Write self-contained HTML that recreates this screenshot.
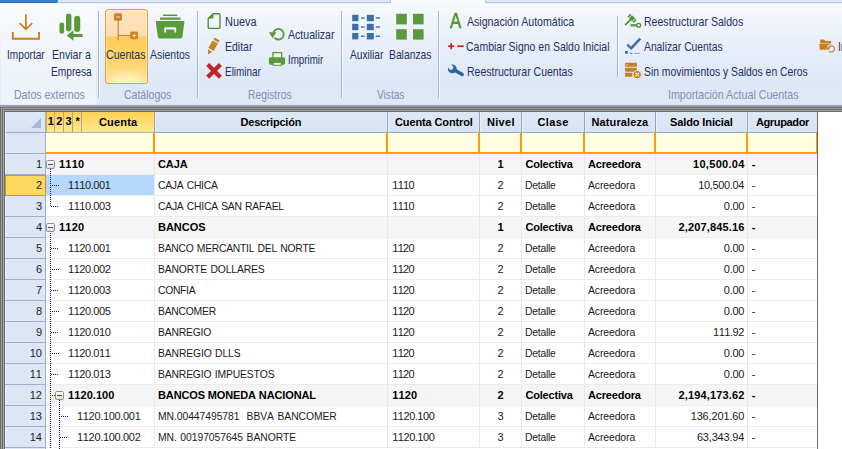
<!DOCTYPE html>
<html lang="es">
<head>
<meta charset="utf-8">
<title>Cuentas</title>
<style>
html,body{margin:0;padding:0;}
body{width:842px;height:449px;overflow:hidden;background:#fff;position:relative;font-family:"Liberation Sans",sans-serif;}
div,span{box-sizing:border-box;}
#ribbon{position:absolute;left:0;top:0;width:842px;height:105px;background:linear-gradient(#f8fbfe 0px,#f3f7fc 12px,#e8eff9 45px,#dee7f5 80px,#dfe8f5 105px);overflow:hidden;}
.ab{position:absolute;}
.rt{position:absolute;transform-origin:0 0;white-space:nowrap;font-size:12.4px;line-height:14px;height:14px;color:#1e3063;}
.gl{position:absolute;transform-origin:0 0;white-space:nowrap;font-size:12.4px;line-height:14px;height:14px;color:#808fb5;}
.sep{position:absolute;width:1px;background:#a7b5d0;}
.sep:after{content:"";position:absolute;left:1px;top:0;width:1px;height:100%;background:rgba(255,255,255,.7);}
svg{position:absolute;overflow:visible;}
#grid{position:absolute;left:0;top:105px;width:842px;height:344px;background:#fff;overflow:hidden;}
.c{position:absolute;transform-origin:0 0;font-kerning:none;white-space:nowrap;font-size:11px;line-height:20px;height:20px;color:#1a1a1a;}
.b{font-weight:bold;color:#000;}
.h{position:absolute;white-space:nowrap;font-size:11px;font-weight:bold;line-height:20px;height:20px;color:#000;text-align:center;}
.rn{position:absolute;left:5px;width:37px;font-kerning:none;text-align:right;font-size:11px;line-height:20px;height:20px;color:#1a1a1a;}
</style>
</head>
<body>

<div id="ribbon">
<div class="ab" style="left:0;top:0;width:842px;height:4px;background:#eef3fa"></div>
<div class="ab" style="left:0;top:0;width:58px;height:3px;background:#3d7fcf;border-bottom:1px solid #2f66ad;border-radius:0 0 2px 0"></div>
<div class="ab" style="left:58px;top:0;width:333px;height:3px;background:#dfe8f5;border-bottom:1px solid #b4c3dc;border-right:1px solid #b4c3dc"></div>
<div class="ab" style="left:391px;top:0;width:94px;height:4px;background:#f8fafd"></div>
<div class="ab" style="left:485px;top:0;width:357px;height:3px;background:#dfe8f5;border-bottom:1px solid #b4c3dc;border-left:1px solid #b4c3dc"></div>
<div class="ab" style="left:1px;top:5px;width:95px;height:99px;border-radius:3px;background:linear-gradient(rgba(255,255,255,.35),rgba(255,255,255,.45) 60%,rgba(255,255,255,.5));box-shadow:0 0 3px rgba(255,255,255,.6)"></div>
<div class="sep" style="left:98px;top:11px;height:87px"></div>
<div class="sep" style="left:197px;top:11px;height:87px"></div>
<div class="sep" style="left:341px;top:11px;height:87px"></div>
<div class="sep" style="left:438px;top:11px;height:87px"></div>
<div class="sep" style="left:617px;top:16px;height:61px"></div>
<div class="ab" style="left:105px;top:9px;width:43px;height:75px;border:1px solid #d9a24a;border-radius:3px;background:radial-gradient(ellipse 26px 16px at 50% 100%,rgba(255,250,205,.95),rgba(255,240,170,0) 100%),linear-gradient(#ffe4c0 0px,#ffdcae 26px,#ffcc5a 27px,#ffd36c 50px,#ffdf8e 73px);box-shadow:inset 0 0 0 1px rgba(255,255,255,.35)"></div>
<div class="rt" style="left:6.9px;top:48.2px;transform:scaleX(0.817)">Importar</div>
<div class="rt" style="left:52.1px;top:48.2px;transform:scaleX(0.853)">Enviar a</div>
<div class="rt" style="left:51.1px;top:64.9px;transform:scaleX(0.822)">Empresa</div>
<div class="rt" style="left:105.8px;top:48.2px;transform:scaleX(0.855)">Cuentas</div>
<div class="rt" style="left:149.9px;top:48.2px;transform:scaleX(0.843)">Asientos</div>
<div class="rt" style="left:225.0px;top:15.0px;transform:scaleX(0.882)">Nueva</div>
<div class="rt" style="left:225.0px;top:39.9px;transform:scaleX(0.846)">Editar</div>
<div class="rt" style="left:225.0px;top:64.8px;transform:scaleX(0.802)">Eliminar</div>
<div class="rt" style="left:287.9px;top:28.1px;transform:scaleX(0.854)">Actualizar</div>
<div class="rt" style="left:287.9px;top:52.9px;transform:scaleX(0.788)">Imprimir</div>
<div class="rt" style="left:349.9px;top:47.7px;transform:scaleX(0.819)">Auxiliar</div>
<div class="rt" style="left:389.1px;top:47.7px;transform:scaleX(0.833)">Balanzas</div>
<div class="rt" style="left:467.2px;top:15.1px;transform:scaleX(0.855)">Asignación Automática</div>
<div class="rt" style="left:466.1px;top:40.2px;transform:scaleX(0.847)">Cambiar Signo en Saldo Inicial</div>
<div class="rt" style="left:467.2px;top:65.0px;transform:scaleX(0.848)">Reestructurar Cuentas</div>
<div class="rt" style="left:643.8px;top:15.1px;transform:scaleX(0.852)">Reestructurar Saldos</div>
<div class="rt" style="left:643.8px;top:40.2px;transform:scaleX(0.833)">Analizar Cuentas</div>
<div class="rt" style="left:643.8px;top:64.9px;transform:scaleX(0.837)">Sin movimientos y Saldos en Ceros</div>
<div class="rt" style="left:837.8px;top:40.2px;transform:scaleX(0.814)">Importar</div>
<div class="gl" style="left:13.6px;top:87.8px;transform:scaleX(0.850)">Datos externos</div>
<div class="gl" style="left:124.3px;top:87.8px;transform:scaleX(0.849)">Catálogos</div>
<div class="gl" style="left:248.4px;top:87.8px;transform:scaleX(0.832)">Registros</div>
<div class="gl" style="left:377.0px;top:87.8px;transform:scaleX(0.817)">Vistas</div>
<div class="gl" style="left:667.6px;top:87.6px;transform:scaleX(0.861)">Importación Actual Cuentas</div>
<svg style="left:0;top:0" width="842" height="105" viewBox="0 0 842 105">
<!-- Importar -->
<g fill="none" stroke="#c8801e" stroke-width="1.7">
<path d="M25.9 14.2V29M19.6 23.2l6.3 6.2 6.3-6.2"/>
<path d="M12.8 32v6.8h26.2V32" stroke-width="1.9"/>
</g>
<!-- Enviar a Empresa -->
<g fill="#5a9a3a">
<rect x="59.4" y="22.4" width="4.8" height="11.4" rx="2.4"/>
<rect x="66" y="13.4" width="5.4" height="18" rx="2.7"/>
<rect x="74.2" y="15.8" width="6" height="16.2" rx="3"/>
<path d="M82.6 33.9v3.2H73.4v3.6l-6.6-5.2 6.6-5.2v3.6z" stroke="#e7eef8" stroke-width="0.9" paint-order="stroke"/>
</g>
<!-- Cuentas tree icon -->
<g fill="#c8832a" stroke="none">
<rect x="117.7" y="20" width="1.1" height="20.4"/>
<rect x="118" y="35" width="12.5" height="1.1"/>
<rect x="114" y="13.2" width="8" height="7.6" rx="1.6"/>
<rect x="130.2" y="31.6" width="7.8" height="7.6" rx="1.6"/>
<rect x="116" y="16.5" width="4" height="1" fill="#ffe2b8"/>
<rect x="132.2" y="35" width="4" height="1" fill="#ffe2b8"/>
<rect x="133.7" y="33.5" width="1" height="4" fill="#ffe2b8"/>
</g>
<!-- Asientos -->
<g fill="#5a9a3a">
<rect x="163" y="14.4" width="14.4" height="1.7" rx="0.6"/>
<rect x="160" y="17.6" width="20.6" height="2.2" rx="0.6"/>
<path d="M156.6 21h27a.8.8 0 0 1 .8 1l-2 14.8a1.8 1.8 0 0 1-1.8 1.6h-21a1.8 1.8 0 0 1-1.8-1.6l-2-14.8a.8.8 0 0 1 .8-1z"/>
<path d="M164.2 32.4v-4.4a.8.8 0 0 1 .8-.8h10.4a.8.8 0 0 1 .8.8v4.4h-1.9v-3h-8.2v3z" fill="#f1f6f0"/>
</g>
<!-- Nueva -->
<g>
<path d="M213.2 13.7h5.6a1.2 1.2 0 0 1 1.2 1.2v12.3a1.2 1.2 0 0 1-1.2 1.2h-9.4a1.2 1.2 0 0 1-1.2-1.2v-8.7z" fill="none" stroke="#4f8f2f" stroke-width="1.35" stroke-linejoin="round"/>
<path d="M213.4 13.7v3.7a1.2 1.2 0 0 1-1.2 1.2h-4z" fill="#4f8f2f"/>
</g>
<!-- Editar pencil -->
<g transform="translate(208.2 53.9) rotate(31)" fill="#c8821e">
<path d="M0 0.3L-2.5 -3.8H2.5z"/>
<rect x="-3" y="-13.9" width="6" height="8.6"/>
<rect x="-3" y="-17.4" width="6" height="2.4" rx="1"/>
</g>
<!-- Eliminar X -->
<g stroke="#c0212b" stroke-width="4.3" fill="none">
<path d="M207.7 64.5l12.7 12.7M220.4 64.5l-12.7 12.7"/>
</g>
<!-- Actualizar -->
<g>
<path d="M273.6 32.2A5.3 5.3 0 1 1 275 38.2" fill="none" stroke="#5a9a3a" stroke-width="1.8" stroke-linecap="round"/>
<path d="M268.8 32.3h7.6l-3.8 6z" fill="#5a9a3a"/>
</g>
<!-- Imprimir -->
<g>
<rect x="273" y="52.6" width="8.6" height="6" fill="#f3f7f3" stroke="#5a9a3a" stroke-width="1.3"/>
<rect x="268.9" y="57.3" width="16.2" height="7.4" rx="1.6" fill="#5a9a3a"/>
<rect x="272.6" y="62.2" width="9.4" height="3.6" fill="#5a9a3a"/>
<rect x="273.8" y="62.9" width="7" height="1.9" fill="#f3f7f3"/>
</g>
<!-- Auxiliar -->
<g fill="#3d6fa8">
<rect x="352.2" y="14.8" width="6.2" height="6.4"/><rect x="361" y="17.3" width="3.6" height="1.4"/><rect x="366.8" y="14.8" width="7" height="6.4"/><rect x="375.8" y="17.3" width="4.2" height="1.4"/>
<rect x="352.2" y="23.8" width="6.2" height="6.4"/><rect x="361" y="26.3" width="3.6" height="1.4"/><rect x="366.8" y="23.8" width="7" height="6.4"/><rect x="375.8" y="26.3" width="4.2" height="1.4"/>
<rect x="352.2" y="33" width="6.2" height="6.4"/><rect x="361" y="35.5" width="3.6" height="1.4"/><rect x="366.8" y="33" width="7" height="6.4"/><rect x="375.8" y="35.5" width="4.2" height="1.4"/>
</g>
<!-- Balanzas -->
<g fill="#5a9a3a">
<rect x="396.2" y="13.8" width="10.6" height="10.6"/><rect x="413" y="13.8" width="10.6" height="10.6"/>
<rect x="396.2" y="29.2" width="10.6" height="10.4"/><rect x="413" y="29.2" width="10.6" height="10.4"/>
</g>
<!-- + - -->
<g fill="#c3202c">
<rect x="448.2" y="45.4" width="6" height="1.7"/><rect x="450.35" y="43.2" width="1.7" height="6.1"/>
<rect x="457.3" y="45.4" width="6.4" height="1.7"/>
</g>
<!-- wrench -->
<g>
<path d="M454.4 70l7.8 4.5" stroke="#2f639c" stroke-width="3.4" stroke-linecap="round" fill="none"/>
<circle cx="452.3" cy="68.9" r="4.4" fill="#2f639c"/>
<circle cx="451" cy="67.6" r="2.3" fill="#e2eaf7"/>
<path d="M451 67.6l-4.5 -4.5" stroke="#e2eaf7" stroke-width="4" fill="none"/>
</g>
<!-- gavel -->
<g fill="#4f8f2f">
<g transform="translate(632 18.3) rotate(45)"><rect x="-4.4" y="-2.1" width="8.8" height="4.2" rx="0.5"/><rect x="-2.9" y="-2.6" width="0.8" height="5.2" fill="#dcebd5"/><rect x="2.1" y="-2.6" width="0.8" height="5.2" fill="#dcebd5"/></g>
<path d="M625.6 24.6l5-5" stroke="#4f8f2f" stroke-width="1.7" stroke-linecap="round"/>
<rect x="630.4" y="23.9" width="6.4" height="2.7" rx="0.4" opacity="0.85"/>
<circle cx="638.7" cy="25.2" r="1.9" fill="#e4f0de" stroke="#4f8f2f" stroke-width="1.3"/>
</g>
<!-- check -->
<g>
<path d="M627.3 44.6l3.9 3.7 9-9.6" fill="none" stroke="#3a6ea8" stroke-width="2.5"/>
<rect x="625" y="51" width="2.8" height="2.7" fill="#3a6ea8"/>
<rect x="630" y="52.8" width="2.4" height="1" fill="#3a6ea8"/>
<rect x="634" y="52.9" width="6.2" height="0.9" fill="#7f9fc6"/>
</g>
<!-- db with x -->
<g fill="#c8801e">
<rect x="625.1" y="62.8" width="11.9" height="3.9" rx="0.8"/>
<rect x="625.1" y="67.8" width="11.9" height="3.9" rx="0.8"/>
<rect x="625.1" y="72.8" width="7.4" height="3.9" rx="0.8"/>
<rect x="626.7" y="64.2" width="1.1" height="1.1" fill="#f5e6cf"/>
<circle cx="637.2" cy="74.6" r="4.2" stroke="#e4ebf6" stroke-width="1" />
<path d="M635.4 72.8l3.6 3.6M639 72.8l-3.6 3.6" stroke="#f5e6cf" stroke-width="1.3" fill="none"/>
</g>
<!-- folder -->
<g fill="#c8801e">
<path d="M820.2 43.4v-3.3a.7.7 0 0 1 .7-.7h3a.7.7 0 0 1 .6.3l.8 1.2h5.2a.7.7 0 0 1 .7.7v1.8z"/>
<path d="M819.3 44h11.8v5.8h-10.6a.8.8 0 0 1-.8-.7z"/>
<circle cx="831.2" cy="48.8" r="4.5" fill="#e7eef8"/>
<path d="M828.6 47.4A3.1 3.1 0 1 1 829.2 51.2" fill="none" stroke="#c8801e" stroke-width="1.2"/>
<path d="M826.3 47.3h4.2l-2.3 3.2z"/>
</g>
</svg>
<div class="ab" style="left:450.0px;top:8.7px;width:18px;height:24px;font-size:22.2px;line-height:24px;color:#4f9229;transform:scaleX(0.76);transform-origin:0 0;-webkit-text-stroke:0.65px #4f9229;will-change:transform">A</div>

</div>
<div id="grid">
<div class="ab" style="left:0;top:0;width:842px;height:1px;background:#8e9fbd"></div>
<div class="ab" style="left:0;top:1px;width:842px;height:1px;background:#a3a3a3"></div>
<div class="ab" style="left:0px;top:2px;width:842px;height:1px;background:#6b6b6b"></div>
<div class="ab" style="left:0px;top:2px;width:1px;height:342px;background:#6b6b6b"></div>
<div class="ab" style="left:1px;top:3px;width:841px;height:1px;background:#a3a3a3"></div>
<div class="ab" style="left:1px;top:3px;width:1px;height:341px;background:#a3a3a3"></div>
<div class="ab" style="left:2px;top:4px;width:840px;height:1px;background:#6b6b6b"></div>
<div class="ab" style="left:2px;top:4px;width:1px;height:340px;background:#6b6b6b"></div>
<div class="ab" style="left:3px;top:5px;width:839px;height:1px;background:#a3a3a3"></div>
<div class="ab" style="left:3px;top:5px;width:1px;height:339px;background:#a3a3a3"></div>
<div class="ab" style="left:4px;top:6px;width:838px;height:1px;background:#6b6b6b"></div>
<div class="ab" style="left:4px;top:6px;width:1px;height:338px;background:#6b6b6b"></div>
<div class="ab" style="left:5px;top:7px;width:812px;height:20px;background:linear-gradient(#dde8f5 0px,#dbe6f4 10px,#d9e4f3 20px)"></div>
<div class="ab" style="left:5px;top:27px;width:812px;height:1px;background:#93a8c9"></div>
<div class="ab" style="left:5px;top:28px;width:40px;height:320px;background:#dce6f4"></div>
<div class="ab" style="left:45px;top:7px;width:1px;height:340px;background:#9fb0cc"></div>
<div class="ab" style="left:5px;top:7px;width:1px;height:340px;background:#eef4fb"></div>
<svg style="left:31px;top:13px" width="10" height="10"><polygon points="10,0 10,10 0,10" fill="#a8b6d4"/></svg>
<div class="ab" style="left:46px;top:7px;width:108px;height:20px;background:linear-gradient(#ffd154 0px,#ffda6a 8px,#ffe27c 14px,#ffe88b 20px)"></div>
<div class="ab" style="left:46px;top:7px;width:1px;height:20px;background:#e9a73a"></div>
<div class="ab" style="left:46px;top:27px;width:108px;height:1px;background:#b3b0a6"></div>
<div class="ab" style="left:54px;top:7px;width:1px;height:20px;background:#a9a598"></div>
<div class="ab" style="left:63px;top:7px;width:1px;height:20px;background:#a9a598"></div>
<div class="ab" style="left:72px;top:7px;width:1px;height:20px;background:#a9a598"></div>
<div class="ab" style="left:81px;top:7px;width:1px;height:20px;background:#a9a598"></div>
<div class="h" style="left:45.8px;width:10px;top:6px">1</div>
<div class="h" style="left:54.4px;width:10px;top:6px">2</div>
<div class="h" style="left:63.6px;width:10px;top:6px">3</div>
<div class="h" style="left:72.60000000000001px;width:10px;top:6px">*</div>
<div class="ab" style="left:154px;top:7px;width:1px;height:20px;background:#8fa3c4"></div>
<div class="ab" style="left:155px;top:7px;width:1px;height:20px;background:#eaf1fa"></div>
<div class="h" style="left:99.0px;top:7px;letter-spacing:0.17px;text-align:left">Cuenta</div>
<div class="ab" style="left:387px;top:7px;width:1px;height:20px;background:#8fa3c4"></div>
<div class="ab" style="left:388px;top:7px;width:1px;height:20px;background:#eaf1fa"></div>
<div class="h" style="left:240.5px;top:7px;letter-spacing:-0.20px;text-align:left">Descripción</div>
<div class="ab" style="left:479px;top:7px;width:1px;height:20px;background:#8fa3c4"></div>
<div class="ab" style="left:480px;top:7px;width:1px;height:20px;background:#eaf1fa"></div>
<div class="h" style="left:395.0px;top:7px;letter-spacing:-0.12px;text-align:left">Cuenta Control</div>
<div class="ab" style="left:521px;top:7px;width:1px;height:20px;background:#8fa3c4"></div>
<div class="ab" style="left:522px;top:7px;width:1px;height:20px;background:#eaf1fa"></div>
<div class="h" style="left:487.0px;top:7px;letter-spacing:0.30px;text-align:left">Nivel</div>
<div class="ab" style="left:584px;top:7px;width:1px;height:20px;background:#8fa3c4"></div>
<div class="ab" style="left:585px;top:7px;width:1px;height:20px;background:#eaf1fa"></div>
<div class="h" style="left:537.5px;top:7px;letter-spacing:0.39px;text-align:left">Clase</div>
<div class="ab" style="left:655px;top:7px;width:1px;height:20px;background:#8fa3c4"></div>
<div class="ab" style="left:656px;top:7px;width:1px;height:20px;background:#eaf1fa"></div>
<div class="h" style="left:591.5px;top:7px;letter-spacing:0.12px;text-align:left">Naturaleza</div>
<div class="ab" style="left:747px;top:7px;width:1px;height:20px;background:#8fa3c4"></div>
<div class="ab" style="left:748px;top:7px;width:1px;height:20px;background:#eaf1fa"></div>
<div class="h" style="left:670.0px;top:7px;letter-spacing:-0.11px;text-align:left">Saldo Inicial</div>
<div class="ab" style="left:817px;top:7px;width:1px;height:20px;background:#5f6f8f"></div>
<div class="h" style="left:755.9px;top:7px;letter-spacing:-0.35px;text-align:left">Agrupador</div>
<div class="ab" style="left:46px;top:28px;width:771px;height:19px;background:#ffffe1"></div>
<div class="ab" style="left:46px;top:47px;width:771px;height:2px;background:#ff9b00"></div>
<div class="ab" style="left:153px;top:28px;width:2px;height:21px;background:#ff9b00"></div>
<div class="ab" style="left:386px;top:28px;width:2px;height:21px;background:#ff9b00"></div>
<div class="ab" style="left:478px;top:28px;width:2px;height:21px;background:#ff9b00"></div>
<div class="ab" style="left:520px;top:28px;width:2px;height:21px;background:#ff9b00"></div>
<div class="ab" style="left:583px;top:28px;width:2px;height:21px;background:#ff9b00"></div>
<div class="ab" style="left:654px;top:28px;width:2px;height:21px;background:#ff9b00"></div>
<div class="ab" style="left:746px;top:28px;width:2px;height:21px;background:#ff9b00"></div>
<div class="ab" style="left:816px;top:28px;width:2px;height:21px;background:#ff9b00"></div>
<div class="ab" style="left:5px;top:48px;width:40px;height:1px;background:#9fb0cc"></div>
<div class="ab" style="left:46px;top:49px;width:771px;height:20px;background:#f5f5f5"></div>
<div class="ab" style="left:46px;top:69px;width:771px;height:1px;background:#ececec"></div>
<div class="ab" style="left:5px;top:69px;width:40px;height:1px;background:#9fb0cc"></div>
<div class="rn" style="top:49px">1</div>
<div class="ab" style="left:154px;top:49px;width:1px;height:20px;background:#e9e9e9"></div>
<div class="ab" style="left:387px;top:49px;width:1px;height:20px;background:#e9e9e9"></div>
<div class="ab" style="left:479px;top:49px;width:1px;height:20px;background:#e9e9e9"></div>
<div class="ab" style="left:521px;top:49px;width:1px;height:20px;background:#e9e9e9"></div>
<div class="ab" style="left:584px;top:49px;width:1px;height:20px;background:#e9e9e9"></div>
<div class="ab" style="left:655px;top:49px;width:1px;height:20px;background:#e9e9e9"></div>
<div class="ab" style="left:747px;top:49px;width:1px;height:20px;background:#e9e9e9"></div>
<div class="c b" style="left:59.10px;top:49px;letter-spacing:0.15px">1110</div>
<div class="c b" style="left:158.00px;top:49px;letter-spacing:-0.11px">CAJA</div>
<div class="c b" style="left:497.45px;top:49px;letter-spacing:0.00px">1</div>
<div class="c b" style="left:525.40px;top:49px;letter-spacing:-0.18px">Colectiva</div>
<div class="c b" style="left:588.00px;top:49px;letter-spacing:-0.19px">Acreedora</div>
<div class="c b" style="left:693.00px;top:49px;letter-spacing:0.31px">10,500.04</div>
<div class="c b" style="left:751.70px;top:49px;letter-spacing:0.00px">-</div>
<div class="ab" style="left:46px;top:70px;width:771px;height:20px;background:#ffffff"></div>
<div class="ab" style="left:46px;top:90px;width:771px;height:1px;background:#ececec"></div>
<div class="ab" style="left:5px;top:90px;width:40px;height:1px;background:#9fb0cc"></div>
<div class="ab" style="left:5px;top:70px;width:41px;height:21px;border:1px solid #c9972f;background:#ffd95d"></div>
<div class="ab" style="left:46px;top:70px;width:108px;height:20px;background:#b6d8fd"></div>
<div class="rn" style="top:70px">2</div>
<div class="ab" style="left:154px;top:70px;width:1px;height:20px;background:#e9e9e9"></div>
<div class="ab" style="left:387px;top:70px;width:1px;height:20px;background:#e9e9e9"></div>
<div class="ab" style="left:479px;top:70px;width:1px;height:20px;background:#e9e9e9"></div>
<div class="ab" style="left:521px;top:70px;width:1px;height:20px;background:#e9e9e9"></div>
<div class="ab" style="left:584px;top:70px;width:1px;height:20px;background:#e9e9e9"></div>
<div class="ab" style="left:655px;top:70px;width:1px;height:20px;background:#e9e9e9"></div>
<div class="ab" style="left:747px;top:70px;width:1px;height:20px;background:#e9e9e9"></div>
<div class="c" style="left:68.00px;top:70px;letter-spacing:-0.44px">1110.001</div>
<div class="c" style="left:158.00px;top:70px;letter-spacing:-0.29px;transform:scaleX(0.94);word-spacing:0.8px">CAJA CHICA</div>
<div class="c" style="left:392.20px;top:70px;letter-spacing:-0.65px">1110</div>
<div class="c" style="left:497.45px;top:70px;letter-spacing:0.00px">2</div>
<div class="c" style="left:525.40px;top:70px;letter-spacing:-0.24px;transform:scaleX(0.94)">Detalle</div>
<div class="c" style="left:588.00px;top:70px;letter-spacing:-0.13px;transform:scaleX(0.95)">Acreedora</div>
<div class="c" style="left:698.20px;top:70px;letter-spacing:-0.34px">10,500.04</div>
<div class="c" style="left:751.70px;top:70px;letter-spacing:0.00px">-</div>
<div class="ab" style="left:46px;top:91px;width:771px;height:20px;background:#ffffff"></div>
<div class="ab" style="left:46px;top:111px;width:771px;height:1px;background:#ececec"></div>
<div class="ab" style="left:5px;top:111px;width:40px;height:1px;background:#9fb0cc"></div>
<div class="rn" style="top:91px">3</div>
<div class="ab" style="left:154px;top:91px;width:1px;height:20px;background:#e9e9e9"></div>
<div class="ab" style="left:387px;top:91px;width:1px;height:20px;background:#e9e9e9"></div>
<div class="ab" style="left:479px;top:91px;width:1px;height:20px;background:#e9e9e9"></div>
<div class="ab" style="left:521px;top:91px;width:1px;height:20px;background:#e9e9e9"></div>
<div class="ab" style="left:584px;top:91px;width:1px;height:20px;background:#e9e9e9"></div>
<div class="ab" style="left:655px;top:91px;width:1px;height:20px;background:#e9e9e9"></div>
<div class="ab" style="left:747px;top:91px;width:1px;height:20px;background:#e9e9e9"></div>
<div class="c" style="left:68.00px;top:91px;letter-spacing:-0.44px">1110.003</div>
<div class="c" style="left:158.00px;top:91px;letter-spacing:-0.26px;transform:scaleX(0.94);word-spacing:0.8px">CAJA CHICA SAN RAFAEL</div>
<div class="c" style="left:392.20px;top:91px;letter-spacing:-0.65px">1110</div>
<div class="c" style="left:497.45px;top:91px;letter-spacing:0.00px">2</div>
<div class="c" style="left:525.40px;top:91px;letter-spacing:-0.24px;transform:scaleX(0.94)">Detalle</div>
<div class="c" style="left:588.00px;top:91px;letter-spacing:-0.13px;transform:scaleX(0.95)">Acreedora</div>
<div class="c" style="left:723.80px;top:91px;letter-spacing:-0.27px">0.00</div>
<div class="c" style="left:751.70px;top:91px;letter-spacing:0.00px">-</div>
<div class="ab" style="left:46px;top:112px;width:771px;height:20px;background:#f5f5f5"></div>
<div class="ab" style="left:46px;top:132px;width:771px;height:1px;background:#ececec"></div>
<div class="ab" style="left:5px;top:132px;width:40px;height:1px;background:#9fb0cc"></div>
<div class="rn" style="top:112px">4</div>
<div class="ab" style="left:154px;top:112px;width:1px;height:20px;background:#e9e9e9"></div>
<div class="ab" style="left:387px;top:112px;width:1px;height:20px;background:#e9e9e9"></div>
<div class="ab" style="left:479px;top:112px;width:1px;height:20px;background:#e9e9e9"></div>
<div class="ab" style="left:521px;top:112px;width:1px;height:20px;background:#e9e9e9"></div>
<div class="ab" style="left:584px;top:112px;width:1px;height:20px;background:#e9e9e9"></div>
<div class="ab" style="left:655px;top:112px;width:1px;height:20px;background:#e9e9e9"></div>
<div class="ab" style="left:747px;top:112px;width:1px;height:20px;background:#e9e9e9"></div>
<div class="c b" style="left:59.10px;top:112px;letter-spacing:0.15px">1120</div>
<div class="c b" style="left:158.00px;top:112px;letter-spacing:-0.01px">BANCOS</div>
<div class="c b" style="left:497.45px;top:112px;letter-spacing:0.00px">1</div>
<div class="c b" style="left:525.40px;top:112px;letter-spacing:-0.18px">Colectiva</div>
<div class="c b" style="left:588.00px;top:112px;letter-spacing:-0.19px">Acreedora</div>
<div class="c b" style="left:678.40px;top:112px;letter-spacing:0.16px">2,207,845.16</div>
<div class="c b" style="left:751.70px;top:112px;letter-spacing:0.00px">-</div>
<div class="ab" style="left:46px;top:133px;width:771px;height:20px;background:#ffffff"></div>
<div class="ab" style="left:46px;top:153px;width:771px;height:1px;background:#ececec"></div>
<div class="ab" style="left:5px;top:153px;width:40px;height:1px;background:#9fb0cc"></div>
<div class="rn" style="top:133px">5</div>
<div class="ab" style="left:154px;top:133px;width:1px;height:20px;background:#e9e9e9"></div>
<div class="ab" style="left:387px;top:133px;width:1px;height:20px;background:#e9e9e9"></div>
<div class="ab" style="left:479px;top:133px;width:1px;height:20px;background:#e9e9e9"></div>
<div class="ab" style="left:521px;top:133px;width:1px;height:20px;background:#e9e9e9"></div>
<div class="ab" style="left:584px;top:133px;width:1px;height:20px;background:#e9e9e9"></div>
<div class="ab" style="left:655px;top:133px;width:1px;height:20px;background:#e9e9e9"></div>
<div class="ab" style="left:747px;top:133px;width:1px;height:20px;background:#e9e9e9"></div>
<div class="c" style="left:68.00px;top:133px;letter-spacing:-0.44px">1120.001</div>
<div class="c" style="left:158.00px;top:133px;letter-spacing:-0.28px;transform:scaleX(0.94);word-spacing:0.8px">BANCO MERCANTIL DEL NORTE</div>
<div class="c" style="left:392.20px;top:133px;letter-spacing:-0.65px">1120</div>
<div class="c" style="left:497.45px;top:133px;letter-spacing:0.00px">2</div>
<div class="c" style="left:525.40px;top:133px;letter-spacing:-0.24px;transform:scaleX(0.94)">Detalle</div>
<div class="c" style="left:588.00px;top:133px;letter-spacing:-0.13px;transform:scaleX(0.95)">Acreedora</div>
<div class="c" style="left:723.80px;top:133px;letter-spacing:-0.27px">0.00</div>
<div class="c" style="left:751.70px;top:133px;letter-spacing:0.00px">-</div>
<div class="ab" style="left:46px;top:154px;width:771px;height:20px;background:#ffffff"></div>
<div class="ab" style="left:46px;top:174px;width:771px;height:1px;background:#ececec"></div>
<div class="ab" style="left:5px;top:174px;width:40px;height:1px;background:#9fb0cc"></div>
<div class="rn" style="top:154px">6</div>
<div class="ab" style="left:154px;top:154px;width:1px;height:20px;background:#e9e9e9"></div>
<div class="ab" style="left:387px;top:154px;width:1px;height:20px;background:#e9e9e9"></div>
<div class="ab" style="left:479px;top:154px;width:1px;height:20px;background:#e9e9e9"></div>
<div class="ab" style="left:521px;top:154px;width:1px;height:20px;background:#e9e9e9"></div>
<div class="ab" style="left:584px;top:154px;width:1px;height:20px;background:#e9e9e9"></div>
<div class="ab" style="left:655px;top:154px;width:1px;height:20px;background:#e9e9e9"></div>
<div class="ab" style="left:747px;top:154px;width:1px;height:20px;background:#e9e9e9"></div>
<div class="c" style="left:68.00px;top:154px;letter-spacing:-0.44px">1120.002</div>
<div class="c" style="left:158.00px;top:154px;letter-spacing:-0.15px;transform:scaleX(0.94);word-spacing:0.8px">BANORTE DOLLARES</div>
<div class="c" style="left:392.20px;top:154px;letter-spacing:-0.65px">1120</div>
<div class="c" style="left:497.45px;top:154px;letter-spacing:0.00px">2</div>
<div class="c" style="left:525.40px;top:154px;letter-spacing:-0.24px;transform:scaleX(0.94)">Detalle</div>
<div class="c" style="left:588.00px;top:154px;letter-spacing:-0.13px;transform:scaleX(0.95)">Acreedora</div>
<div class="c" style="left:723.80px;top:154px;letter-spacing:-0.27px">0.00</div>
<div class="c" style="left:751.70px;top:154px;letter-spacing:0.00px">-</div>
<div class="ab" style="left:46px;top:175px;width:771px;height:20px;background:#ffffff"></div>
<div class="ab" style="left:46px;top:195px;width:771px;height:1px;background:#ececec"></div>
<div class="ab" style="left:5px;top:195px;width:40px;height:1px;background:#9fb0cc"></div>
<div class="rn" style="top:175px">7</div>
<div class="ab" style="left:154px;top:175px;width:1px;height:20px;background:#e9e9e9"></div>
<div class="ab" style="left:387px;top:175px;width:1px;height:20px;background:#e9e9e9"></div>
<div class="ab" style="left:479px;top:175px;width:1px;height:20px;background:#e9e9e9"></div>
<div class="ab" style="left:521px;top:175px;width:1px;height:20px;background:#e9e9e9"></div>
<div class="ab" style="left:584px;top:175px;width:1px;height:20px;background:#e9e9e9"></div>
<div class="ab" style="left:655px;top:175px;width:1px;height:20px;background:#e9e9e9"></div>
<div class="ab" style="left:747px;top:175px;width:1px;height:20px;background:#e9e9e9"></div>
<div class="c" style="left:68.00px;top:175px;letter-spacing:-0.44px">1120.003</div>
<div class="c" style="left:158.00px;top:175px;letter-spacing:-0.32px;transform:scaleX(0.94);word-spacing:0.8px">CONFIA</div>
<div class="c" style="left:392.20px;top:175px;letter-spacing:-0.65px">1120</div>
<div class="c" style="left:497.45px;top:175px;letter-spacing:0.00px">2</div>
<div class="c" style="left:525.40px;top:175px;letter-spacing:-0.24px;transform:scaleX(0.94)">Detalle</div>
<div class="c" style="left:588.00px;top:175px;letter-spacing:-0.13px;transform:scaleX(0.95)">Acreedora</div>
<div class="c" style="left:723.80px;top:175px;letter-spacing:-0.27px">0.00</div>
<div class="c" style="left:751.70px;top:175px;letter-spacing:0.00px">-</div>
<div class="ab" style="left:46px;top:196px;width:771px;height:20px;background:#ffffff"></div>
<div class="ab" style="left:46px;top:216px;width:771px;height:1px;background:#ececec"></div>
<div class="ab" style="left:5px;top:216px;width:40px;height:1px;background:#9fb0cc"></div>
<div class="rn" style="top:196px">8</div>
<div class="ab" style="left:154px;top:196px;width:1px;height:20px;background:#e9e9e9"></div>
<div class="ab" style="left:387px;top:196px;width:1px;height:20px;background:#e9e9e9"></div>
<div class="ab" style="left:479px;top:196px;width:1px;height:20px;background:#e9e9e9"></div>
<div class="ab" style="left:521px;top:196px;width:1px;height:20px;background:#e9e9e9"></div>
<div class="ab" style="left:584px;top:196px;width:1px;height:20px;background:#e9e9e9"></div>
<div class="ab" style="left:655px;top:196px;width:1px;height:20px;background:#e9e9e9"></div>
<div class="ab" style="left:747px;top:196px;width:1px;height:20px;background:#e9e9e9"></div>
<div class="c" style="left:68.00px;top:196px;letter-spacing:-0.44px">1120.005</div>
<div class="c" style="left:158.00px;top:196px;letter-spacing:-0.25px;transform:scaleX(0.94);word-spacing:0.8px">BANCOMER</div>
<div class="c" style="left:392.20px;top:196px;letter-spacing:-0.65px">1120</div>
<div class="c" style="left:497.45px;top:196px;letter-spacing:0.00px">2</div>
<div class="c" style="left:525.40px;top:196px;letter-spacing:-0.24px;transform:scaleX(0.94)">Detalle</div>
<div class="c" style="left:588.00px;top:196px;letter-spacing:-0.13px;transform:scaleX(0.95)">Acreedora</div>
<div class="c" style="left:723.80px;top:196px;letter-spacing:-0.27px">0.00</div>
<div class="c" style="left:751.70px;top:196px;letter-spacing:0.00px">-</div>
<div class="ab" style="left:46px;top:217px;width:771px;height:20px;background:#ffffff"></div>
<div class="ab" style="left:46px;top:237px;width:771px;height:1px;background:#ececec"></div>
<div class="ab" style="left:5px;top:237px;width:40px;height:1px;background:#9fb0cc"></div>
<div class="rn" style="top:217px">9</div>
<div class="ab" style="left:154px;top:217px;width:1px;height:20px;background:#e9e9e9"></div>
<div class="ab" style="left:387px;top:217px;width:1px;height:20px;background:#e9e9e9"></div>
<div class="ab" style="left:479px;top:217px;width:1px;height:20px;background:#e9e9e9"></div>
<div class="ab" style="left:521px;top:217px;width:1px;height:20px;background:#e9e9e9"></div>
<div class="ab" style="left:584px;top:217px;width:1px;height:20px;background:#e9e9e9"></div>
<div class="ab" style="left:655px;top:217px;width:1px;height:20px;background:#e9e9e9"></div>
<div class="ab" style="left:747px;top:217px;width:1px;height:20px;background:#e9e9e9"></div>
<div class="c" style="left:68.00px;top:217px;letter-spacing:-0.44px">1120.010</div>
<div class="c" style="left:158.00px;top:217px;letter-spacing:-0.20px;transform:scaleX(0.94);word-spacing:0.8px">BANREGIO</div>
<div class="c" style="left:392.20px;top:217px;letter-spacing:-0.65px">1120</div>
<div class="c" style="left:497.45px;top:217px;letter-spacing:0.00px">2</div>
<div class="c" style="left:525.40px;top:217px;letter-spacing:-0.24px;transform:scaleX(0.94)">Detalle</div>
<div class="c" style="left:588.00px;top:217px;letter-spacing:-0.13px;transform:scaleX(0.95)">Acreedora</div>
<div class="c" style="left:713.00px;top:217px;letter-spacing:-0.45px">111.92</div>
<div class="c" style="left:751.70px;top:217px;letter-spacing:0.00px">-</div>
<div class="ab" style="left:46px;top:238px;width:771px;height:20px;background:#ffffff"></div>
<div class="ab" style="left:46px;top:258px;width:771px;height:1px;background:#ececec"></div>
<div class="ab" style="left:5px;top:258px;width:40px;height:1px;background:#9fb0cc"></div>
<div class="rn" style="top:238px">10</div>
<div class="ab" style="left:154px;top:238px;width:1px;height:20px;background:#e9e9e9"></div>
<div class="ab" style="left:387px;top:238px;width:1px;height:20px;background:#e9e9e9"></div>
<div class="ab" style="left:479px;top:238px;width:1px;height:20px;background:#e9e9e9"></div>
<div class="ab" style="left:521px;top:238px;width:1px;height:20px;background:#e9e9e9"></div>
<div class="ab" style="left:584px;top:238px;width:1px;height:20px;background:#e9e9e9"></div>
<div class="ab" style="left:655px;top:238px;width:1px;height:20px;background:#e9e9e9"></div>
<div class="ab" style="left:747px;top:238px;width:1px;height:20px;background:#e9e9e9"></div>
<div class="c" style="left:68.00px;top:238px;letter-spacing:-0.44px">1120.011</div>
<div class="c" style="left:158.00px;top:238px;letter-spacing:-0.13px;transform:scaleX(0.94);word-spacing:0.8px">BANREGIO DLLS</div>
<div class="c" style="left:392.20px;top:238px;letter-spacing:-0.65px">1120</div>
<div class="c" style="left:497.45px;top:238px;letter-spacing:0.00px">2</div>
<div class="c" style="left:525.40px;top:238px;letter-spacing:-0.24px;transform:scaleX(0.94)">Detalle</div>
<div class="c" style="left:588.00px;top:238px;letter-spacing:-0.13px;transform:scaleX(0.95)">Acreedora</div>
<div class="c" style="left:723.80px;top:238px;letter-spacing:-0.27px">0.00</div>
<div class="c" style="left:751.70px;top:238px;letter-spacing:0.00px">-</div>
<div class="ab" style="left:46px;top:259px;width:771px;height:20px;background:#ffffff"></div>
<div class="ab" style="left:46px;top:279px;width:771px;height:1px;background:#ececec"></div>
<div class="ab" style="left:5px;top:279px;width:40px;height:1px;background:#9fb0cc"></div>
<div class="rn" style="top:259px">11</div>
<div class="ab" style="left:154px;top:259px;width:1px;height:20px;background:#e9e9e9"></div>
<div class="ab" style="left:387px;top:259px;width:1px;height:20px;background:#e9e9e9"></div>
<div class="ab" style="left:479px;top:259px;width:1px;height:20px;background:#e9e9e9"></div>
<div class="ab" style="left:521px;top:259px;width:1px;height:20px;background:#e9e9e9"></div>
<div class="ab" style="left:584px;top:259px;width:1px;height:20px;background:#e9e9e9"></div>
<div class="ab" style="left:655px;top:259px;width:1px;height:20px;background:#e9e9e9"></div>
<div class="ab" style="left:747px;top:259px;width:1px;height:20px;background:#e9e9e9"></div>
<div class="c" style="left:68.00px;top:259px;letter-spacing:-0.44px">1120.013</div>
<div class="c" style="left:158.00px;top:259px;letter-spacing:-0.16px;transform:scaleX(0.94);word-spacing:0.8px">BANREGIO IMPUESTOS</div>
<div class="c" style="left:392.20px;top:259px;letter-spacing:-0.65px">1120</div>
<div class="c" style="left:497.45px;top:259px;letter-spacing:0.00px">2</div>
<div class="c" style="left:525.40px;top:259px;letter-spacing:-0.24px;transform:scaleX(0.94)">Detalle</div>
<div class="c" style="left:588.00px;top:259px;letter-spacing:-0.13px;transform:scaleX(0.95)">Acreedora</div>
<div class="c" style="left:723.80px;top:259px;letter-spacing:-0.27px">0.00</div>
<div class="c" style="left:751.70px;top:259px;letter-spacing:0.00px">-</div>
<div class="ab" style="left:46px;top:280px;width:771px;height:20px;background:#f5f5f5"></div>
<div class="ab" style="left:46px;top:300px;width:771px;height:1px;background:#ececec"></div>
<div class="ab" style="left:5px;top:300px;width:40px;height:1px;background:#9fb0cc"></div>
<div class="rn" style="top:280px">12</div>
<div class="ab" style="left:154px;top:280px;width:1px;height:20px;background:#e9e9e9"></div>
<div class="ab" style="left:387px;top:280px;width:1px;height:20px;background:#e9e9e9"></div>
<div class="ab" style="left:479px;top:280px;width:1px;height:20px;background:#e9e9e9"></div>
<div class="ab" style="left:521px;top:280px;width:1px;height:20px;background:#e9e9e9"></div>
<div class="ab" style="left:584px;top:280px;width:1px;height:20px;background:#e9e9e9"></div>
<div class="ab" style="left:655px;top:280px;width:1px;height:20px;background:#e9e9e9"></div>
<div class="ab" style="left:747px;top:280px;width:1px;height:20px;background:#e9e9e9"></div>
<div class="c b" style="left:68.10px;top:280px;letter-spacing:0.06px">1120.100</div>
<div class="c b" style="left:158.00px;top:280px;letter-spacing:-0.13px">BANCOS MONEDA NACIONAL</div>
<div class="c b" style="left:392.20px;top:280px;letter-spacing:0.18px">1120</div>
<div class="c b" style="left:497.45px;top:280px;letter-spacing:0.00px">2</div>
<div class="c b" style="left:525.40px;top:280px;letter-spacing:-0.18px">Colectiva</div>
<div class="c b" style="left:588.00px;top:280px;letter-spacing:-0.19px">Acreedora</div>
<div class="c b" style="left:678.60px;top:280px;letter-spacing:0.14px">2,194,173.62</div>
<div class="c b" style="left:751.70px;top:280px;letter-spacing:0.00px">-</div>
<div class="ab" style="left:46px;top:301px;width:771px;height:20px;background:#ffffff"></div>
<div class="ab" style="left:46px;top:321px;width:771px;height:1px;background:#ececec"></div>
<div class="ab" style="left:5px;top:321px;width:40px;height:1px;background:#9fb0cc"></div>
<div class="rn" style="top:301px">13</div>
<div class="ab" style="left:154px;top:301px;width:1px;height:20px;background:#e9e9e9"></div>
<div class="ab" style="left:387px;top:301px;width:1px;height:20px;background:#e9e9e9"></div>
<div class="ab" style="left:479px;top:301px;width:1px;height:20px;background:#e9e9e9"></div>
<div class="ab" style="left:521px;top:301px;width:1px;height:20px;background:#e9e9e9"></div>
<div class="ab" style="left:584px;top:301px;width:1px;height:20px;background:#e9e9e9"></div>
<div class="ab" style="left:655px;top:301px;width:1px;height:20px;background:#e9e9e9"></div>
<div class="ab" style="left:747px;top:301px;width:1px;height:20px;background:#e9e9e9"></div>
<div class="c" style="left:77.00px;top:301px;letter-spacing:-0.32px">1120.100.001</div>
<div class="c" style="left:158.00px;top:301px;letter-spacing:-0.06px;transform:scaleX(0.94);word-spacing:0.8px">MN.00447495781&nbsp; BBVA BANCOMER</div>
<div class="c" style="left:392.20px;top:301px;letter-spacing:-0.47px">1120.100</div>
<div class="c" style="left:497.45px;top:301px;letter-spacing:0.00px">3</div>
<div class="c" style="left:525.40px;top:301px;letter-spacing:-0.24px;transform:scaleX(0.94)">Detalle</div>
<div class="c" style="left:588.00px;top:301px;letter-spacing:-0.13px;transform:scaleX(0.95)">Acreedora</div>
<div class="c" style="left:690.70px;top:301px;letter-spacing:-0.15px">136,201.60</div>
<div class="c" style="left:751.70px;top:301px;letter-spacing:0.00px">-</div>
<div class="ab" style="left:46px;top:322px;width:771px;height:20px;background:#ffffff"></div>
<div class="ab" style="left:46px;top:342px;width:771px;height:1px;background:#ececec"></div>
<div class="ab" style="left:5px;top:342px;width:40px;height:1px;background:#9fb0cc"></div>
<div class="rn" style="top:322px">14</div>
<div class="ab" style="left:154px;top:322px;width:1px;height:20px;background:#e9e9e9"></div>
<div class="ab" style="left:387px;top:322px;width:1px;height:20px;background:#e9e9e9"></div>
<div class="ab" style="left:479px;top:322px;width:1px;height:20px;background:#e9e9e9"></div>
<div class="ab" style="left:521px;top:322px;width:1px;height:20px;background:#e9e9e9"></div>
<div class="ab" style="left:584px;top:322px;width:1px;height:20px;background:#e9e9e9"></div>
<div class="ab" style="left:655px;top:322px;width:1px;height:20px;background:#e9e9e9"></div>
<div class="ab" style="left:747px;top:322px;width:1px;height:20px;background:#e9e9e9"></div>
<div class="c" style="left:77.00px;top:322px;letter-spacing:-0.32px">1120.100.002</div>
<div class="c" style="left:158.00px;top:322px;letter-spacing:-0.06px;transform:scaleX(0.94);word-spacing:0.8px">MN. 00197057645 BANORTE</div>
<div class="c" style="left:392.20px;top:322px;letter-spacing:-0.47px">1120.100</div>
<div class="c" style="left:497.45px;top:322px;letter-spacing:0.00px">3</div>
<div class="c" style="left:525.40px;top:322px;letter-spacing:-0.24px;transform:scaleX(0.94)">Detalle</div>
<div class="c" style="left:588.00px;top:322px;letter-spacing:-0.13px;transform:scaleX(0.95)">Acreedora</div>
<div class="c" style="left:696.90px;top:322px;letter-spacing:-0.18px">63,343.94</div>
<div class="c" style="left:751.70px;top:322px;letter-spacing:0.00px">-</div>
<div class="ab" style="left:46px;top:343px;width:771px;height:1px;background:#fff"></div>
<div class="ab" style="left:818px;top:7px;width:24px;height:340px;background:#fff"></div>
<div class="ab" style="left:817px;top:7px;width:1px;height:340px;background:#6a6a6a"></div>
<svg style="left:0;top:0" width="842" height="344" viewBox="0 0 842 344"><g stroke="#14148c" stroke-width="1" stroke-dasharray="1 1" shape-rendering="crispEdges"><line x1="50.5" y1="64" x2="50.5" y2="101"/><line x1="52" y1="80.5" x2="59" y2="80.5"/><line x1="51" y1="101.5" x2="58" y2="101.5"/><line x1="50.5" y1="128" x2="50.5" y2="345"/><line x1="51" y1="143.5" x2="58" y2="143.5"/><line x1="52" y1="164.5" x2="59" y2="164.5"/><line x1="51" y1="185.5" x2="58" y2="185.5"/><line x1="52" y1="206.5" x2="59" y2="206.5"/><line x1="51" y1="227.5" x2="58" y2="227.5"/><line x1="52" y1="248.5" x2="59" y2="248.5"/><line x1="51" y1="269.5" x2="58" y2="269.5"/><line x1="52" y1="290.5" x2="55" y2="290.5"/><line x1="59.5" y1="295" x2="59.5" y2="344"/><line x1="61" y1="311.5" x2="68" y2="311.5"/><line x1="60" y1="332.5" x2="67" y2="332.5"/></g><defs><linearGradient id="bx" x1="0" y1="0" x2="0" y2="1"><stop offset="0" stop-color="#fff"/><stop offset="0.5" stop-color="#f4f4f4"/><stop offset="1" stop-color="#d9d9d9"/></linearGradient></defs><rect x="46.5" y="55.5" width="8" height="8" rx="1.2" fill="url(#bx)" stroke="#8f8f8f"/><rect x="48" y="59" width="5" height="1" fill="#2a3f9f"/><rect x="46.5" y="118.5" width="8" height="8" rx="1.2" fill="url(#bx)" stroke="#8f8f8f"/><rect x="48" y="122" width="5" height="1" fill="#2a3f9f"/><rect x="55.5" y="286.5" width="8" height="8" rx="1.2" fill="url(#bx)" stroke="#8f8f8f"/><rect x="57" y="290" width="5" height="1" fill="#2a3f9f"/></svg>
</div>
</body>
</html>
